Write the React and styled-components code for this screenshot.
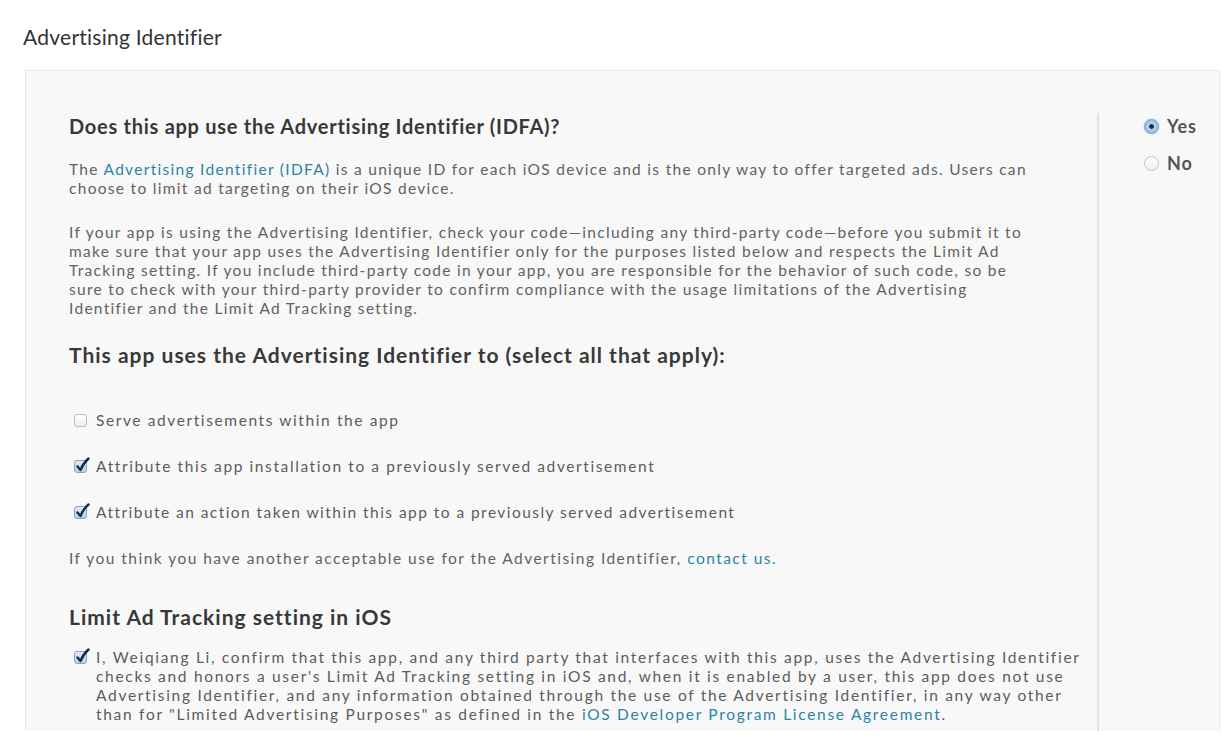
import React from 'react';
import styled, { createGlobalStyle } from 'styled-components';

const GlobalStyle = createGlobalStyle`
  html, body {
    margin: 0;
    padding: 0;
    background: #ffffff;
  }
  body {
    font-family: Lato, "Open Sans", "Liberation Sans", sans-serif;
    color: #5a5a5a;
  }
`;

const Page = styled.div`
  width: 1228px;
  height: 748px;
  overflow: hidden;
  padding: 24px 8px 0 23px;
  box-sizing: border-box;
`;

const PageTitle = styled.h1`
  margin: 0 0 20px 0;
  font-size: 21px;
  line-height: 26px;
  font-weight: 400;
  color: #333;
  letter-spacing: 0.25px;
`;

const Panel = styled.section`
  display: flex;
  height: 661px;
  background: #f8f8f8;
  border: 1px solid #e8e8e8;
  border-bottom: none;
  margin-left: 2px;
  box-sizing: border-box;
`;

const Main = styled.div`
  width: 1071px;
  padding: 44px 0 0 43px;
  box-sizing: border-box;
`;

const Side = styled.div`
  flex: 1;
  margin-top: 42px;
  border-left: 2px solid #e2e2e2;
  padding: 3px 0 0 45px;
  display: flex;
  flex-direction: column;
  gap: 16px;
`;

const Heading = styled.h2`
  margin: 0 0 ${(p) => p.$gap || 15}px 0;
  font-size: ${(p) => (p.$big ? 21 : 20)}px;
  line-height: 22px;
  font-weight: 700;
  color: #383838;
  white-space: nowrap;
  letter-spacing: ${(p) => (p.$big ? 1.0 : 0.73)}px;
`;

const Para = styled.p`
  margin: 0 0 ${(p) => p.$gap || 14}px 0;
  font-size: 15.5px;
  line-height: 19px;
  color: #626262;
  white-space: nowrap;
  letter-spacing: ${(p) => p.$ls || 1.3}px;
`;

const Link = styled.a`
  color: #2c84a4;
  text-decoration: none;
`;

const CheckRow = styled.label`
  display: flex;
  align-items: flex-start;
  gap: 9px;
  margin: 0 0 ${(p) => (p.$gap === undefined ? 27 : p.$gap)}px 5px;
  font-size: 15.5px;
  line-height: 19px;
  color: #5c5c5c;
  white-space: nowrap;
  letter-spacing: ${(p) => p.$ls || 1.6}px;
`;

const BoxWrap = styled.span`
  position: relative;
  flex: none;
  width: 13px;
  height: 13px;
  margin-top: 3px;
  border: 1px solid ${(p) => (p.$on ? '#8aa4c4' : '#bdbdbd')};
  border-radius: 3px;
  box-sizing: border-box;
  background: ${(p) =>
    p.$on
      ? 'linear-gradient(#e3ecf7, #b9cce4)'
      : 'linear-gradient(#ffffff, #ececec)'};
`;

const Tick = styled.svg`
  position: absolute;
  left: 0px;
  top: -4px;
`;

const RadioRow = styled.label`
  display: flex;
  align-items: center;
  gap: 8px;
  font-size: 18px;
  font-weight: 700;
  color: #555;
  line-height: 21px;
  letter-spacing: 0.9px;
`;

const RadioDot = styled.span`
  width: 15px;
  height: 15px;
  border-radius: 50%;
  box-sizing: border-box;
  border: 1px solid ${(p) => (p.$on ? '#6a9fd4' : '#c4c4c4')};
  background: ${(p) =>
    p.$on
      ? 'radial-gradient(circle, #1f2a3a 0 2px, #b8d3f0 2.6px, #7eb0e4 100%)'
      : 'linear-gradient(#ffffff, #eeeeee)'};
  box-shadow: ${(p) => (p.$on ? '0 0 2px #9fc3ea' : 'none')};
`;

function CheckBox({ checked }) {
  return (
    <BoxWrap $on={checked}>
      {checked && (
        <Tick width="15" height="16" viewBox="0 0 15 16">
          <path
            d="M2.5 9.5 L5.5 13 C7.5 8 10 4.5 13.5 1.5"
            fill="none"
            stroke="#1b2a4a"
            strokeWidth="2.4"
            strokeLinecap="round"
            strokeLinejoin="round"
          />
        </Tick>
      )}
    </BoxWrap>
  );
}

function Option({ checked, children, gap, ls }) {
  return (
    <CheckRow $gap={gap} $ls={ls}>
      <CheckBox checked={checked} />
      <span>{children}</span>
    </CheckRow>
  );
}

export default function App() {
  const [idfa, setIdfa] = React.useState('yes');

  return (
    <>
      <GlobalStyle />
      <Page>
        <PageTitle>Advertising Identifier</PageTitle>

        <Panel>
          <Main>
            <Heading $gap={23}>Does this app use the Advertising Identifier (IDFA)?</Heading>

            <Para $gap={25}>
              The <Link href="#">Advertising Identifier (IDFA)</Link> is a unique ID for each iOS device and is the only way to offer targeted ads. Users can
              <br />
              choose to limit ad targeting on their iOS device.
            </Para>

            <Para $gap={26}>
              If your app is using the Advertising Identifier, check your code—including any third-party code—before you submit it to
              <br />
              make sure that your app uses the Advertising Identifier only for the purposes listed below and respects the Limit Ad
              <br />
              Tracking setting. If you include third-party code in your app, you are responsible for the behavior of such code, so be
              <br />
              sure to check with your third-party provider to confirm compliance with the usage limitations of the Advertising
              <br />
              Identifier and the Limit Ad Tracking setting.
            </Para>

            <Heading $big $gap={45}>This app uses the Advertising Identifier to (select all that apply):</Heading>

            <Option checked={false}>Serve advertisements within the app</Option>
            <Option checked>Attribute this app installation to a previously served advertisement</Option>
            <Option checked ls={1.45}>Attribute an action taken within this app to a previously served advertisement</Option>

            <Para $gap={38} $ls={1.47}>
              If you think you have another acceptable use for the Advertising Identifier, <Link href="#">contact us.</Link>
            </Para>

            <Heading $big $gap={20}>Limit Ad Tracking setting in iOS</Heading>

            <Option checked gap={0} ls={1.7}>
              I, Weiqiang Li, confirm that this app, and any third party that interfaces with this app, uses the Advertising Identifier
              <br />
              checks and honors a user's Limit Ad Tracking setting in iOS and, when it is enabled by a user, this app does not use
              <br />
              Advertising Identifier, and any information obtained through the use of the Advertising Identifier, in any way other
              <br />
              than for "Limited Advertising Purposes" as defined in the <Link href="#">iOS Developer Program License Agreement</Link>.
            </Option>
          </Main>

          <Side>
            <RadioRow onClick={() => setIdfa('yes')}>
              <RadioDot $on={idfa === 'yes'} />
              Yes
            </RadioRow>
            <RadioRow onClick={() => setIdfa('no')}>
              <RadioDot $on={idfa === 'no'} />
              No
            </RadioRow>
          </Side>
        </Panel>
      </Page>
    </>
  );
}
